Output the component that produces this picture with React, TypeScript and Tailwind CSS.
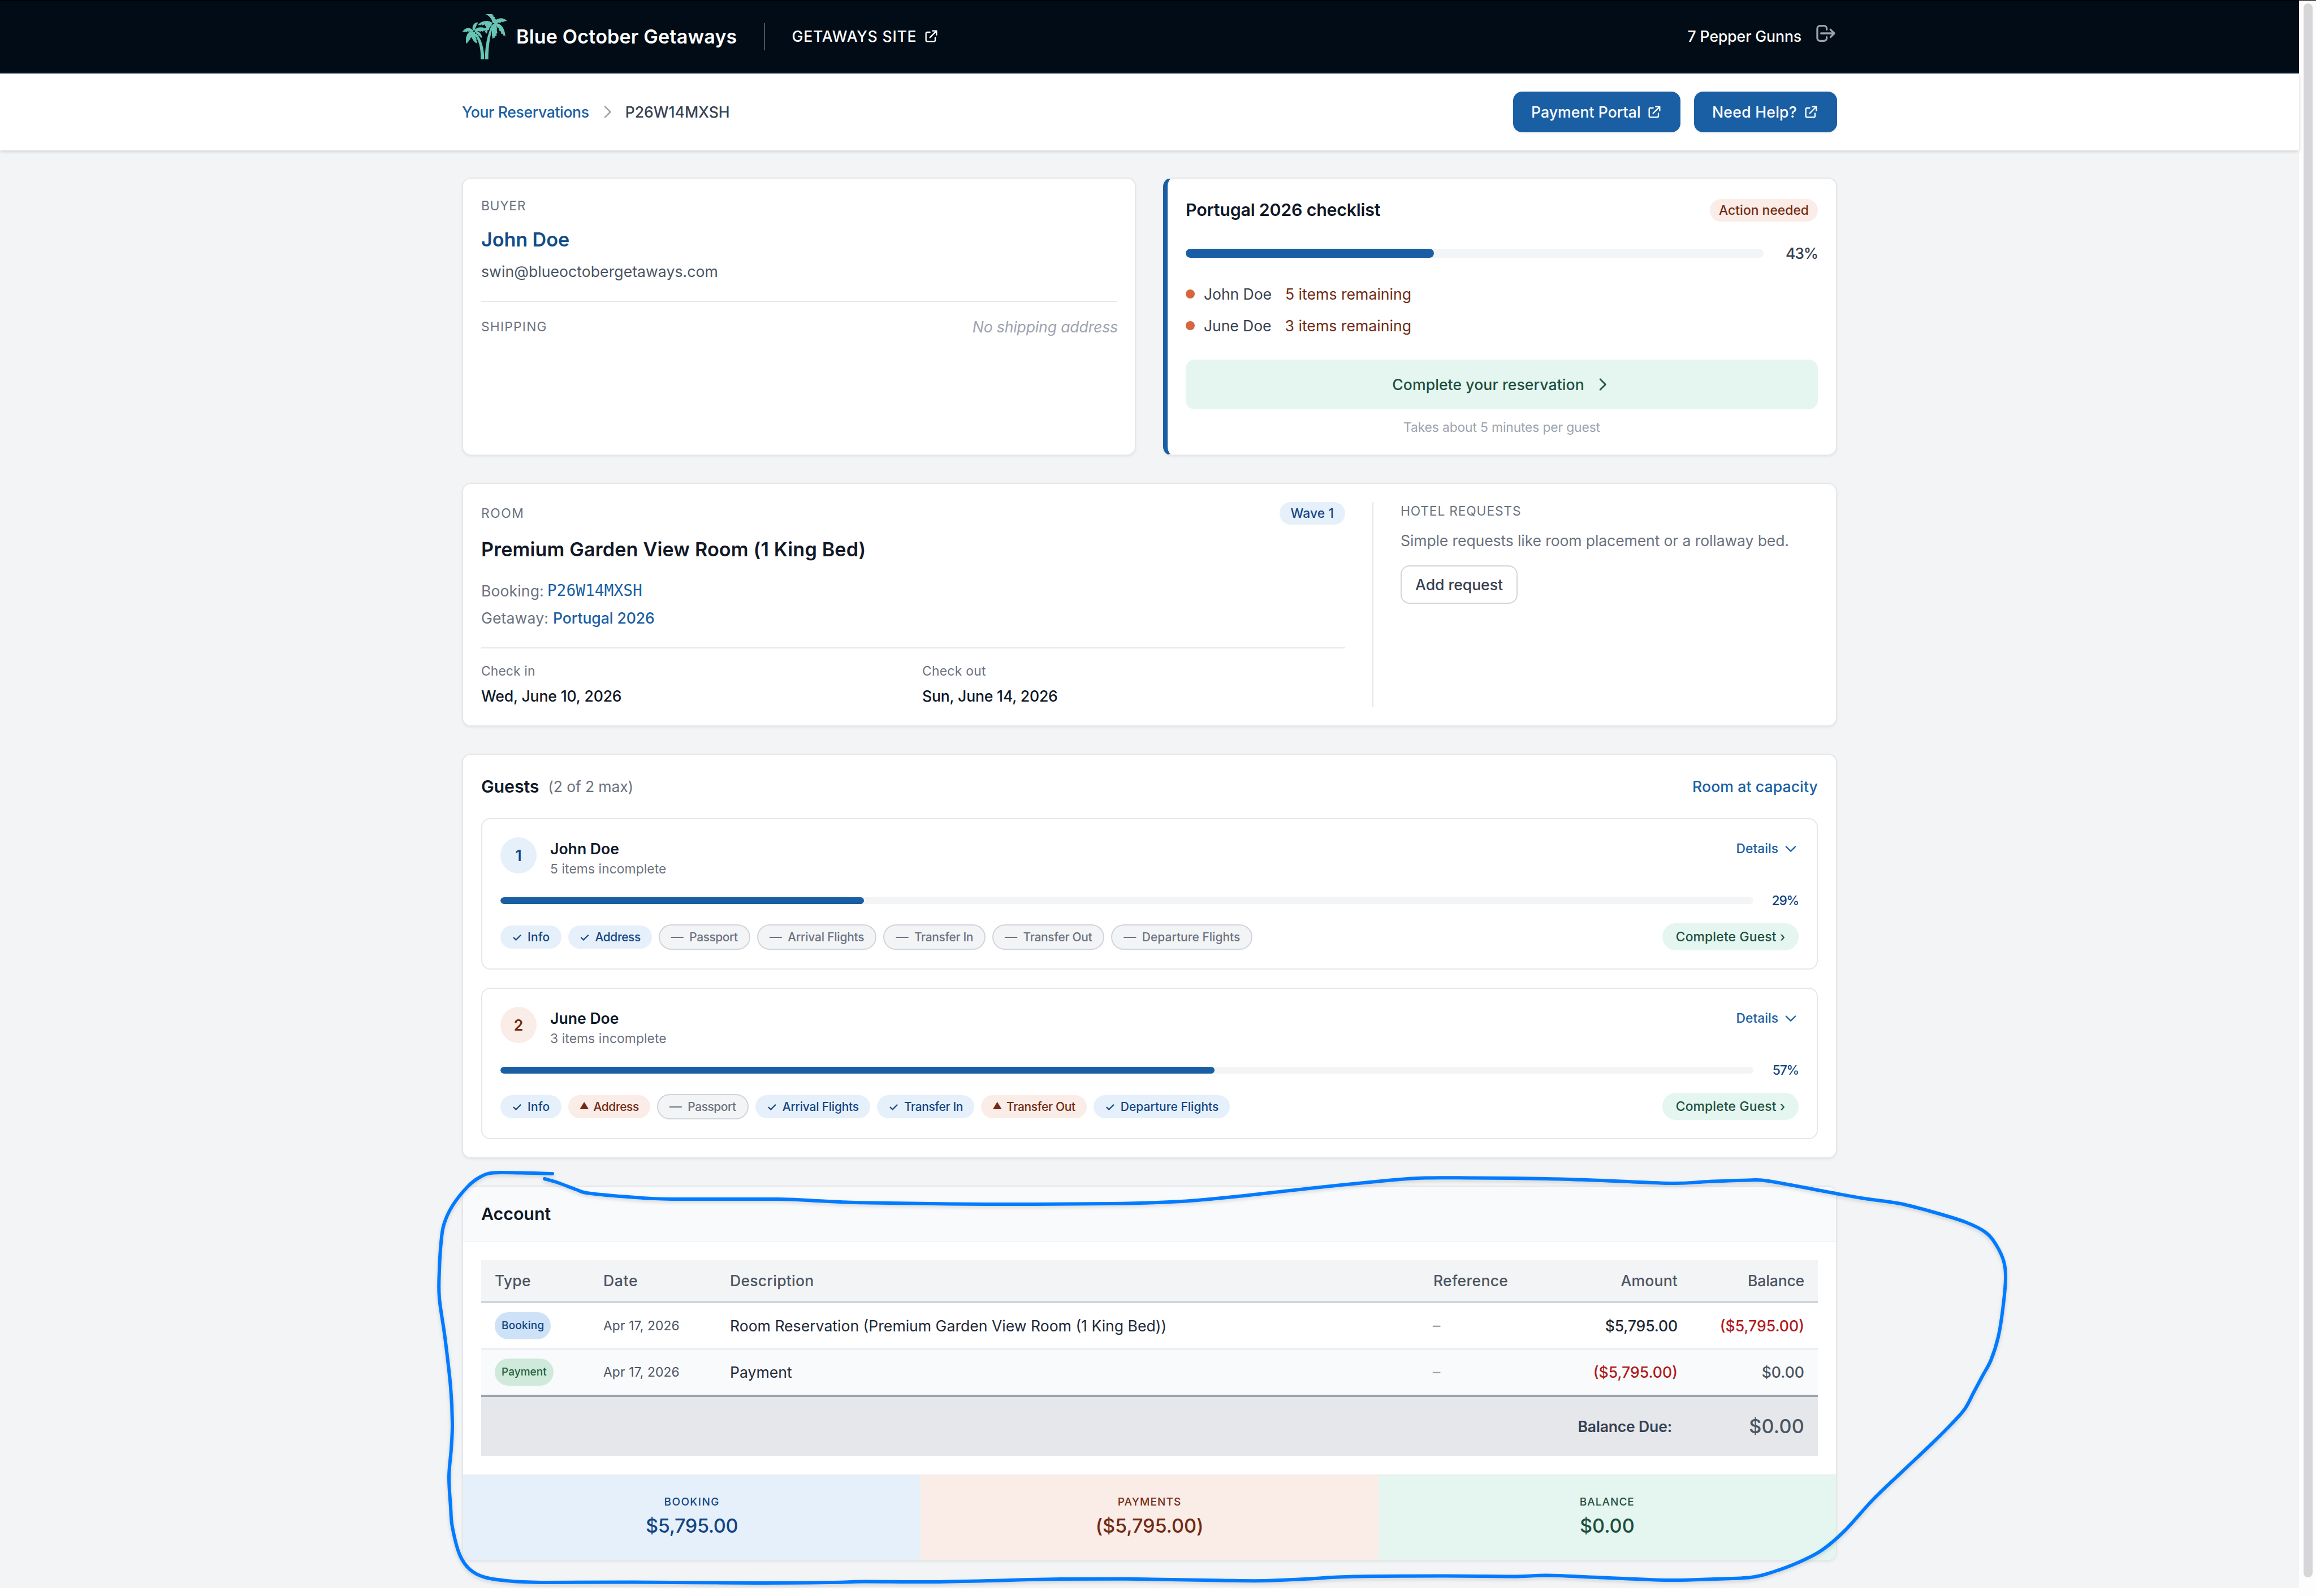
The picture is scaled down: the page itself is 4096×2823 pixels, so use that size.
import React from "react";

type IconProps = { d: string; className: string; strokeWidth?: number };

const EXTERNAL = "M10 6H6a2 2 0 00-2 2v10a2 2 0 002 2h10a2 2 0 002-2v-4M14 4h6m0 0v6m0-6L10 14";
const CHEVRON_RIGHT = "M9 5l7 7-7 7";
const CHEVRON_DOWN = "M19 9l-7 7-7-7";
const LOGOUT =
  "M17 16l4-4m0 0l-4-4m4 4H7m6 4v1a3 3 0 01-3 3H6a3 3 0 01-3-3V7a3 3 0 013-3h4a3 3 0 013 3v1";

function Icon({ d, className, strokeWidth = 2 }: IconProps) {
  return (
    <svg
      viewBox="0 0 24 24"
      fill="none"
      stroke="currentColor"
      strokeWidth={strokeWidth}
      strokeLinecap="round"
      strokeLinejoin="round"
      className={className}
    >
      <path d={d} />
    </svg>
  );
}

function PalmLogo() {
  return (
    <svg viewBox="21 42 240 240" fill="#68c5b5" className="size-20 shrink-0">
      <path d="M120 282 C122 235 116 190 88 150 L96 143 C124 172 139 220 139 282 Z" />
      <path d="M144 282 C142 215 155 155 178 101 L187 102 C169 160 161 215 161 282 Z" />
      {/* left crown */}
      <path d="M80 128 C66 112 44 108 23 134 L29 135 L33 138 L38 134 L45 138 L51 133 L59 136 L66 131 L76 134 Z" />
      <path d="M80 130 C72 112 78 88 108 84 L101 89 L106 93 L98 96 L102 102 L95 104 L97 111 L91 114 L92 124 Z" />
      <path d="M86 128 C98 112 124 106 149 119 L144 121 L149 127 L141 127 L143 133 L134 130 L133 136 L125 131 L119 135 L108 132 L98 136 Z" />
      <path d="M80 128 C54 130 36 158 44 200 L48 193 L51 195 L53 186 L58 188 L59 178 L65 179 L66 168 L73 166 L78 150 Z" />
      <path d="M76 134 C66 156 74 184 101 198 L99 190 L102 187 L97 181 L99 174 L94 168 L95 158 L90 150 L90 136 Z" />
      <path d="M88 132 C108 130 126 142 128 170 L122 164 L117 166 L114 156 L107 156 L104 148 L96 144 Z" />
      {/* right crown */}
      <path d="M184 90 C180 72 172 54 146 42 L184 42 L181 47 L190 50 L188 56 L197 58 L194 66 L201 70 L197 86 Z" />
      <path d="M188 86 C204 62 238 54 261 78 L254 77 L250 82 L243 79 L240 86 L230 82 L224 89 L214 86 L206 92 L194 94 Z" />
      <path d="M182 88 C160 70 120 76 105 102 L113 99 L118 102 L124 97 L131 103 L139 97 L148 103 L156 97 L166 101 L180 96 Z" />
      <path d="M142 100 L160 94 L180 92 L176 104 L168 112 L164 126 L157 126 L156 138 L149 148 L150 138 L142 140 L146 128 L140 124 L150 112 Z" />
      <path d="M184 94 C178 122 178 152 184 174 L190 166 L196 168 L198 158 L205 157 L204 146 L209 142 L206 130 L207 116 L198 94 Z" />
      <path d="M192 90 C222 86 250 112 251 162 L245 154 L240 156 L237 146 L229 146 L228 134 L219 130 L217 118 L208 112 Z" />
    </svg>
  );
}

type Tone = "done" | "todo" | "alert";
type Chip = { label: string; tone: Tone; tracking: string };

const markers: Record<Tone, { glyph: string; slot: string; chip: string }> = {
  done: { glyph: "✓", slot: "w-[28px] text-[20.9px]", chip: "h-[41px] bg-[#e6f0fb] px-5 text-[#134682]" },
  todo: {
    glyph: "—",
    slot: "w-[32.5px] text-[22px] tracking-normal",
    chip: "h-[45px] border-2 border-[#d1d5db] bg-[#f3f4f6] px-5 text-[#6b7280]",
  },
  alert: { glyph: "▲", slot: "w-[25px] text-[17px] -translate-y-px", chip: "h-[41px] bg-[#faece7] px-5 text-[#712b13]" },
};

function StatusChip({ label, tone, tracking }: Chip) {
  const m = markers[tone];
  return (
    <span className={`flex items-center rounded-full text-[20.9px] leading-[33px] font-[460] whitespace-nowrap ${m.chip}`}>
      <span className={`shrink-0 ${m.slot}`}>{m.glyph}</span>
      <span className={tracking}>{label}</span>
    </span>
  );
}

const chip = (label: string, tone: Tone): Chip => ({
  label,
  tone,
  tracking:
    {
      Info: "tracking-[0.33px]",
      Address: "tracking-[-0.38px]",
      Passport: "tracking-[-0.42px]",
      "Arrival Flights": "tracking-[-0.18px]",
      "Transfer In": "tracking-[-0.32px]",
      "Transfer Out": "tracking-[-0.28px]",
    }[label] ?? "tracking-[0.06px]",
});

const guests = [
  {
    name: "John Doe",
    note: "5 items incomplete",
    percent: 29,
    badge: "bg-[#e6f0fb] text-[#134682]",
    chips: [
      chip("Info", "done"),
      chip("Address", "done"),
      chip("Passport", "todo"),
      chip("Arrival Flights", "todo"),
      chip("Transfer In", "todo"),
      chip("Transfer Out", "todo"),
      chip("Departure Flights", "todo"),
    ],
  },
  {
    name: "June Doe",
    note: "3 items incomplete",
    percent: 57,
    badge: "bg-[#faece7] text-[#712b13]",
    chips: [
      chip("Info", "done"),
      chip("Address", "alert"),
      chip("Passport", "todo"),
      chip("Arrival Flights", "done"),
      chip("Transfer In", "done"),
      chip("Transfer Out", "alert"),
      chip("Departure Flights", "done"),
    ],
  },
];

const card = "rounded-2xl border-2 border-[#e5e7eb] bg-white shadow-[0_2px_4px_rgba(0,0,0,0.06)]";
const label24 = "text-[22.8px] leading-8";
const body28 = "text-[26.6px] leading-10";
const columns = "grid grid-cols-[191px_224px_1244px_260px_221px_224px] items-center";

function Header() {
  return (
    <header className="h-[130px] border-t border-b-2 border-t-black border-b-[#051c35] bg-[#020c16]">
      <div className="mx-auto flex h-[127px] w-[2432px] items-center justify-between text-white">
        <div className="flex items-center">
          <PalmLogo />
          <span className="ml-4 text-[34.2px] font-[570] tracking-[0.12px]">Blue October Getaways</span>
          <span className="ml-[47px] h-12 w-0.5 bg-[#4b5563]" />
          <a className="ml-12 flex items-center text-[26.6px] font-[460] tracking-[0.78px]">
            GETAWAYS SITE
            <Icon d={EXTERNAL} className="ml-3 size-7" />
          </a>
        </div>
        <div className="flex items-center">
          <span className="text-[26.6px] font-[460] tracking-[-0.1px]">7 Pepper Gunns</span>
          <Icon d={LOGOUT} className="mb-3 ml-[23px] size-10 text-[#9ca3af]" />
        </div>
      </div>
    </header>
  );
}

function SubNav() {
  return (
    <nav className="relative h-[136px] bg-white shadow-[0_2px_6px_rgba(0,0,0,0.15)]">
      <div className="mx-auto flex h-full w-[2432px] items-center justify-between text-[26.6px] font-[460]">
        <div className="flex items-center gap-4">
          <a className="pt-0.5 tracking-[-0.38px] text-[#1a5fa4]">Your Reservations</a>
          <Icon d={CHEVRON_RIGHT} className="size-8 text-[#9ca3af]" />
          <span className="pt-0.5 text-[#374151]">P26W14MXSH</span>
        </div>
        <div className="flex gap-6">
          <button className="flex h-[72px] w-[296px] items-center justify-between rounded-2xl bg-[#1a5fa4] px-8 text-white shadow-[0_2px_4px_rgba(0,0,0,0.06)]">
            <span className="pt-0.5 tracking-[0.05px]">Payment Portal</span>
            <Icon d={EXTERNAL} className="size-7" />
          </button>
          <button className="flex h-[72px] w-[253px] items-center justify-between rounded-2xl bg-[#1a5fa4] px-8 text-white shadow-[0_2px_4px_rgba(0,0,0,0.06)]">
            <span className="pt-0.5 tracking-[0.26px]">Need Help?</span>
            <Icon d={EXTERNAL} className="size-7" />
          </button>
        </div>
      </div>
    </nav>
  );
}

function BuyerCard() {
  return (
    <section className={`p-8 ${card}`}>
      <div className={`${label24} tracking-[0.65px] text-[#6b7280]`}>BUYER</div>
      <div className="mt-4 text-[34.2px] leading-[56px] font-[570] tracking-[-0.1px] text-[#134d88]">John Doe</div>
      <div className={`mt-2 ${body28} tracking-[0.05px] text-[#4b5563]`}>swin@blueoctobergetaways.com</div>
      <div className="mt-8 flex items-center justify-between border-t-2 border-[#e5e7eb] pt-6">
        <span className={`${label24} tracking-[1.2px] text-[#6b7280]`}>SHIPPING</span>
        <span className={`-mr-0.5 ${body28} tracking-[-0.15px] text-[#9ca3af] italic`}>No shipping address</span>
      </div>
    </section>
  );
}

function ChecklistCard() {
  const rows = [
    { name: "John Doe", left: "5 items remaining" },
    { name: "June Doe", left: "3 items remaining" },
  ];
  return (
    <section className={`p-8 ${card} border-l-8 border-l-[#1a5fa4]`}>
      <div className="flex h-12 items-center justify-between">
        <h2 className="text-[30.4px] font-[570] tracking-[-0.23px] text-[#111827]">Portugal 2026 checklist</h2>
        <span className="flex h-10 items-center rounded-full bg-[#faece7] px-4 text-[22.8px] font-[460] tracking-[0.05px] text-[#712b13]">
          Action needed
        </span>
      </div>
      <div className="mt-8 flex h-10 items-center gap-6">
        <div className="h-4 flex-1 overflow-hidden rounded-full bg-[#f3f4f6]">
          <div className="h-full w-[43%] rounded-full bg-[#1a5fa4]" />
        </div>
        <span className="w-[72px] pt-0.5 text-right text-[26.6px] font-[460] tracking-[-1.2px] text-[#374151]">43%</span>
      </div>
      <div className="mt-8 flex flex-col gap-4">
        {rows.map((r) => (
          <div key={r.name} className={`flex items-center ${body28}`}>
            <span className="size-4 rounded-full bg-[#d7663f]" />
            <span className="ml-4 tracking-[-0.1px] text-[#374151]">{r.name}</span>
            <span className="ml-6 tracking-[0.03px] text-[#712b13]">{r.left}</span>
          </div>
        ))}
      </div>
      <button className="mt-10 flex h-[88px] w-full items-center justify-center gap-4 rounded-2xl bg-[#e4f6ef] text-[26.6px] font-[460] text-[#1f4f3f]">
        <span className="pt-0.5 tracking-[0.07px]">Complete your reservation</span>
        <Icon d={CHEVRON_RIGHT} className="size-8" />
      </button>
      <div className={`mt-4 text-center ${label24} tracking-[-0.12px] text-[#9ca3af]`}>Takes about 5 minutes per guest</div>
    </section>
  );
}

function RoomCard() {
  return (
    <section className={`flex p-8 ${card}`}>
      <div className="w-[1528px]">
        <div className="flex h-10 items-center justify-between">
          <span className={`${label24} tracking-[1.6px] text-[#6b7280]`}>ROOM</span>
          <span className="flex h-10 items-center rounded-full bg-[#e6f0fb] px-5 text-[22.8px] font-[460] tracking-[0.1px] text-[#134682]">
            Wave 1
          </span>
        </div>
        <h2 className="mt-4 text-[34.2px] leading-[56px] font-[570] tracking-[0.14px] text-[#111827]">
          Premium Garden View Room (1 King Bed)
        </h2>
        <div className={`mt-6 flex h-[41px] items-center gap-1.5 ${body28}`}>
          <span className="tracking-[0.1px] text-[#6b7280]">Booking:</span>
          <span className="font-['DejaVu_Sans_Mono',monospace] text-[28px] tracking-[-0.06px] text-[#1a5fa4]">P26W14MXSH</span>
        </div>
        <div className={`mt-2 flex items-center gap-2 ${body28}`}>
          <span className="tracking-[0.12px] text-[#6b7280]">Getaway:</span>
          <span className="font-[460] tracking-[-0.08px] text-[#1a5fa4]">Portugal 2026</span>
        </div>
        <div className="mt-8 grid grid-cols-2 gap-8 border-t-2 border-[#e5e7eb] pt-6">
          <div>
            <div className={`${label24} tracking-[0.15px] text-[#6b7280]`}>Check in</div>
            <div className={`mt-2 ${body28} font-[460] tracking-[-0.16px] text-[#111827]`}>Wed, June 10, 2026</div>
          </div>
          <div>
            <div className={`${label24} tracking-[0.3px] text-[#6b7280]`}>Check out</div>
            <div className={`mt-2 ${body28} font-[460] tracking-[-0.2px] text-[#111827]`}>Sun, June 14, 2026</div>
          </div>
        </div>
      </div>
      <div className="ml-12 flex-1 border-l-2 border-[#e5e7eb] pl-12">
        <div className={`${label24} tracking-[0.82px] text-[#6b7280]`}>HOTEL REQUESTS</div>
        <div className={`mt-4 ${body28} tracking-[-0.13px] whitespace-nowrap text-[#6b7280]`}>
          Simple requests like room placement or a rollaway bed.
        </div>
        <button className="mt-6 h-[68px] w-[207px] rounded-2xl border-2 border-[#d1d5db] pt-0.5 text-[26.6px] font-[460] tracking-[-0.05px] text-[#374151]">
          Add request
        </button>
      </div>
    </section>
  );
}

function GuestsCard() {
  return (
    <section className={`p-8 ${card}`}>
      <div className="flex h-12 items-center justify-between">
        <div className="flex items-center gap-4">
          <h2 className="pt-0.5 text-[30.4px] font-[570] tracking-[-0.15px] text-[#111827]">Guests</h2>
          <span className="pt-0.5 text-[26.6px] tracking-[-0.17px] text-[#6b7280]">(2 of 2 max)</span>
        </div>
        <span className="pt-0.5 text-[26.6px] font-[460] tracking-[0.1px] text-[#1a5fa4]">Room at capacity</span>
      </div>
      <div className="mt-8 flex flex-col gap-8">
        {guests.map((g, i) => (
          <article key={g.name} className="rounded-2xl border-2 border-[#e5e7eb] p-8">
            <div className="flex items-start">
              <span className={`flex size-16 items-center justify-center rounded-full pt-0.5 text-[26.6px] font-[570] ${g.badge}`}>
                {i + 1}
              </span>
              <div className="ml-6 flex-1">
                <div className={`${body28} font-[570] text-[#111827]`}>{g.name}</div>
                <div className={`${label24} tracking-[0.1px] text-[#6b7280]`}>{g.note}</div>
              </div>
              <a className="flex h-10 items-center gap-2 text-[22.8px] font-[460] text-[#1a5fa4]">
                Details
                <Icon d={CHEVRON_DOWN} className="size-7" />
              </a>
            </div>
            <div className="mt-6 flex h-8 items-center gap-6">
              <div className="h-3 flex-1 overflow-hidden rounded-full bg-[#f3f4f6]">
                <div className="h-full rounded-full bg-[#1a5fa4]" style={{ width: `${g.percent}%` }} />
              </div>
              <span className="w-14 text-right text-[22.8px] font-[460] tracking-[-1.2px] whitespace-nowrap text-[#134682]">
                {g.percent}%
              </span>
            </div>
            <div className="mt-6 flex h-12 items-center justify-between">
              <div className="flex items-center gap-3">
                {g.chips.map((c) => (
                  <StatusChip key={c.label} {...c} />
                ))}
              </div>
              <button className="h-12 w-[241px] rounded-full bg-[#e4f6ef] text-[22.8px] font-[460] tracking-[0.2px] whitespace-nowrap text-[#1f4f3f]">
                Complete Guest ›
              </button>
            </div>
          </article>
        ))}
      </div>
    </section>
  );
}

function AccountCard() {
  return (
    <section className={`overflow-hidden ${card}`}>
      <div className="flex h-[98px] items-center border-b-2 border-[#f3f4f6] bg-[#f9fafb] px-8 pt-0.5">
        <h2 className="text-[30.4px] font-[570] tracking-[-0.05px] text-[#111827]">Account</h2>
      </div>
      <div className="p-8 text-[26.6px] whitespace-nowrap">
        <div className={`${columns} h-[76px] border-b-4 border-[#d1d5db] bg-[#f3f4f6] pt-0.5 font-[480] tracking-[0.15px] text-[#4b5563]`}>
          <span className="px-6">Type</span>
          <span className="pr-6 pl-[25px] tracking-[0.6px]">Date</span>
          <span className="pr-6 pl-[25px] tracking-[0.22px]">Description</span>
          <span className="pr-6 pl-[25px] tracking-[0.25px]">Reference</span>
          <span className="px-6 text-right">Amount</span>
          <span className="px-6 text-right tracking-[-0.2px]">Balance</span>
        </div>
        <div className={`${columns} h-[82px] border-b-2 border-[#e5e7eb] text-[#1f2937]`}>
          <span className="px-6">
            <span className="flex h-12 w-fit items-center rounded-full bg-[#cde2f6] px-3 text-[19px] font-[460] tracking-[0.2px] text-[#134682]">
              Booking
            </span>
          </span>
          <span className="pr-6 pl-[25px] text-[22.8px] tracking-[0.13px] text-[#4b5563]">Apr 17, 2026</span>
          <span className="pt-0.5 pr-6 pl-[25px]">Room Reservation (Premium Garden View Room (1 King Bed))</span>
          <span className="px-6 text-[#9ca3af]">–</span>
          <span className="px-6 pt-0.5 text-right font-[460] tracking-[-0.15px]">$5,795.00</span>
          <span className="px-6 pt-0.5 text-right font-[460]">
            <span className="text-[#b01c1c]">($5,795.00)</span>
          </span>
        </div>
        <div className={`${columns} h-20 bg-[#f9fafb] text-[#1f2937]`}>
          <span className="px-6">
            <span className="flex h-12 w-fit items-center rounded-full bg-[#cfe9db] px-3 text-[19px] font-[460] tracking-[0.05px] text-[#24603f]">
              Payment
            </span>
          </span>
          <span className="pr-6 pl-[25px] text-[22.8px] tracking-[0.13px] text-[#4b5563]">Apr 17, 2026</span>
          <span className="pt-0.5 pr-6 pl-[25px]">Payment</span>
          <span className="px-6 text-[#9ca3af]">–</span>
          <span className="px-6 pt-0.5 text-right font-[460] text-[#b01c1c]">($5,795.00)</span>
          <span className="px-6 pt-0.5 text-right font-[460] text-[#4b5563]">$0.00</span>
        </div>
        <div className="flex h-[108px] items-center justify-end border-t-4 border-[#9ca3af] bg-[#e5e7eb]">
          <span className="pt-0.5 font-[570] tracking-[-0.2px] text-[#374151]">Balance Due:</span>
          <span className="w-[258px] pr-6 text-right text-[34.2px] font-[470] tracking-[0.2px] text-[#4b5563]">$0.00</span>
        </div>
      </div>
      <div className="grid grid-cols-3 border-t-2 border-[#f3f4f6] text-center">
        <div className="bg-[#e6f0fb] py-8 text-[#134682]">
          <div className="pt-px text-[19px] leading-[29px] font-[460] tracking-[1.4px]">BOOKING</div>
          <div className="text-[34.2px] leading-[56px] font-[550] tracking-[-0.4px]">$5,795.00</div>
        </div>
        <div className="bg-[#faece7] py-8 text-[#712b13]">
          <div className="pt-px text-[19px] leading-[29px] font-[460] tracking-[1.1px]">PAYMENTS</div>
          <div className="text-[34.2px] leading-[56px] font-[550] tracking-[-0.1px]">($5,795.00)</div>
        </div>
        <div className="bg-[#e4f6ef] py-8 text-[#1f4f3f]">
          <div className="pt-px text-[19px] leading-[29px] font-[460] tracking-[1px]">BALANCE</div>
          <div className="text-[34.2px] leading-[56px] font-[550]">$0.00</div>
        </div>
      </div>
    </section>
  );
}

/* Hand-drawn loop around the account section. */
const loop: [number, number][] = [
  [977, 2076], [921, 2074.6], [872, 2074.5], [849, 2082], [827, 2099], [800, 2133], [785, 2166], [780, 2198],
  [777, 2247], [777, 2296], [787, 2366], [797, 2454], [800, 2518], [798, 2563], [794, 2612], [797, 2666],
  [800, 2701], [813, 2750], [831, 2776], [858, 2790], [907, 2797], [965, 2799], [1117, 2798.5], [1340, 2800],
  [1474, 2799], [1528, 2797.5], [1653, 2798], [1787, 2795], [1876, 2793], [2010, 2793], [2160, 2795.5],
  [2236, 2796], [2307, 2793], [2396, 2788.5], [2557, 2787.5], [2682, 2788.5], [2736, 2786.5], [2825, 2790],
  [2950, 2795], [3030, 2793], [3097, 2790], [3137, 2780], [3182, 2763], [3222, 2742], [3262, 2708],
  [3312, 2653], [3361, 2606], [3415, 2555], [3452, 2518], [3475, 2492], [3490, 2464], [3506, 2434], [3521, 2406],
  [3534, 2365], [3542, 2316], [3547, 2262], [3544, 2232], [3531, 2203], [3512, 2180], [3477, 2162],
  [3423, 2145], [3361, 2129], [3298, 2120], [3236, 2109], [3128, 2089], [3093, 2087.5], [3021, 2090],
  [2959, 2093], [2843, 2088.5], [2736, 2085], [2602, 2083.5], [2521, 2083.5], [2459, 2087.5], [2325, 2101],
  [2200, 2115], [2090, 2125], [1965, 2129], [1742, 2130], [1537, 2127.5], [1456, 2124.5], [1376, 2121],
  [1188, 2121], [1117, 2117.5], [1041, 2110.5], [1019, 2104], [987, 2092], [963, 2085],
];

function smooth(p: [number, number][]) {
  let d = `M${p[0][0]} ${p[0][1]}`;
  for (let i = 0; i < p.length - 1; i++) {
    const a = p[Math.max(i - 1, 0)];
    const b = p[i];
    const c = p[i + 1];
    const e = p[Math.min(i + 2, p.length - 1)];
    d += `C${b[0] + (c[0] - a[0]) / 6} ${b[1] + (c[1] - a[1]) / 6} ${c[0] - (e[0] - b[0]) / 6} ${c[1] - (e[1] - b[1]) / 6} ${c[0]} ${c[1]}`;
  }
  return d;
}

function Annotation() {
  return (
    <svg
      viewBox="0 0 4096 2823"
      className="pointer-events-none absolute inset-0 h-full w-full drop-shadow-[0_3px_3px_rgba(0,0,0,0.15)]"
    >
      <path d={smooth(loop)} fill="none" stroke="#007bff" strokeWidth="6" strokeLinecap="round" strokeLinejoin="round" />
    </svg>
  );
}

export default function App() {
  return (
    <div className="relative flex h-[2823px] w-[4096px] overflow-hidden bg-white font-['Inter',sans-serif]">
      <div className="w-[4066px]">
        <Header />
        <SubNav />
        <main className="bg-[#f3f4f6] py-12">
          <div className="mx-auto flex w-[2432px] flex-col gap-12">
            <div className="grid grid-cols-2 gap-12">
              <BuyerCard />
              <ChecklistCard />
            </div>
            <RoomCard />
            <GuestsCard />
            <AccountCard />
          </div>
        </main>
      </div>
      <div className="flex-1 border-t border-black bg-[#fdfdfd] pt-[5px] pl-2">
        <div className="h-[2784px] w-4 rounded-full bg-[#d6d6d8]" />
      </div>
      <Annotation />
    </div>
  );
}
